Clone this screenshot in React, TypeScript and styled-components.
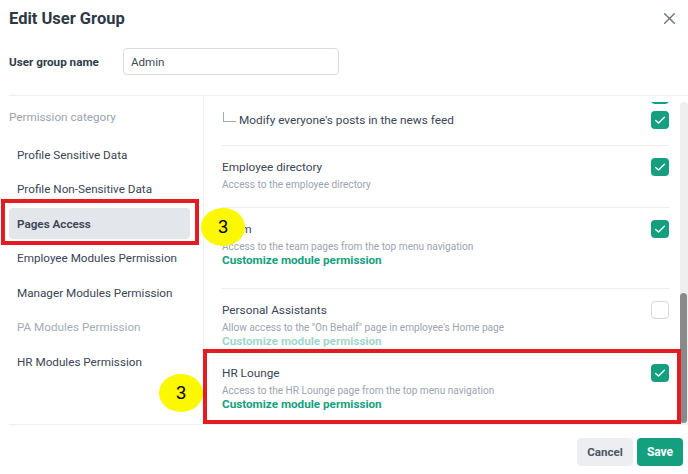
import React from "react";
import styled, { createGlobalStyle } from "styled-components";

const GREEN = "#14a07f";

const Global = createGlobalStyle`
  html, body { margin: 0; padding: 0; background: #ffffff; }
  body { font-family: Roboto, "Noto Sans", Arial, sans-serif; -webkit-font-smoothing: antialiased; }
  * { box-sizing: border-box; }
`;

const Stage = styled.div`
  position: relative;
  width: 688px;
  height: 474px;
  overflow: hidden;
  background: #fff;
`;

const Dialog = styled.div`
  display: flex;
  flex-direction: column;
  padding-left: 9px;
`;

const Header = styled.header`
  height: 36px;
  display: flex;
  align-items: center;
  justify-content: space-between;
  padding-right: 13px;
`;

const Title = styled.h1`
  margin: 0;
  font-size: 16.5px;
  font-weight: 700;
  color: #2d3746;
`;

const CloseButton = styled.button`
  border: 0;
  background: transparent;
  padding: 0;
  width: 11px;
  height: 11px;
  display: flex;
  color: #6b7280;
`;

const NameRow = styled.div`
  display: flex;
  align-items: center;
  margin-top: 12px;
  height: 27px;
`;

const NameLabel = styled.label`
  width: 114px;
  font-size: 11.7px;
  font-weight: 700;
  color: #2f3a4a;
`;

const NameInput = styled.div`
  width: 216px;
  height: 27px;
  border: 1px solid #d9dde3;
  border-radius: 4px;
  padding: 0 7px;
  display: flex;
  align-items: center;
  font-size: 11.6px;
  color: #404a58;
`;

const Body = styled.div`
  margin-top: 20px;
  height: 330px;
  border-top: 1px solid #eef0f2;
  border-bottom: 1px solid #eef0f2;
  display: grid;
  grid-template-columns: 195px 1fr;
`;

const Nav = styled.nav`
  border-right: 1px solid #eef0f2;
  display: flex;
  flex-direction: column;
`;

const NavHeading = styled.div`
  height: 42px;
  display: flex;
  align-items: center;
  font-size: 11.7px;
  color: #9aa3ae;
`;

const NavList = styled.div`
  margin-top: 1px;
  display: flex;
  flex-direction: column;
  gap: 3.5px;
`;

const NavItem = styled.div<{ $active?: boolean; $muted?: boolean }>`
  height: 31px;
  padding-left: 8px;
  display: flex;
  align-items: center;
  border-radius: 4px;
  font-size: 11.7px;
  font-weight: ${(p) => (p.$active ? 600 : 400)};
  color: ${(p) => (p.$muted ? "#a3abb5" : "#3a4454")};
  background: ${(p) => (p.$active ? "#e3e6ea" : "transparent")};
  margin-right: 13px;
`;

const Panel = styled.section`
  padding-top: 6px;
  display: flex;
  min-height: 0;
`;

const Viewport = styled.div`
  flex: 1;
  overflow: hidden;
  display: flex;
  flex-direction: column;
  justify-content: flex-end;
  padding: 0 11px 0 18px;
`;

const Track = styled.div`
  width: 8px;
  background: #efefef;
  border-radius: 4px 4px 0 0;
  display: flex;
  flex-direction: column;
  justify-content: flex-end;
  padding: 0 1px 1px 0;
`;

const Thumb = styled.div`
  height: 130px;
  background: #8a8a8a;
  border-radius: 4px;
`;

const Row = styled.div<{ $tail: number }>`
  border-top: 1px solid #eceef1;
  padding-top: 12px;
  padding-bottom: ${(p) => p.$tail}px;
  display: flex;
  flex-direction: column;
  flex-shrink: 0;
  &:first-child {
    border-top: 0;
  }
`;

const RowMain = styled.div`
  display: flex;
  justify-content: space-between;
  align-items: flex-start;
`;

const Info = styled.div`
  display: flex;
  flex-direction: column;
`;

const RowTitle = styled.div`
  height: 18px;
  line-height: 18px;
  font-size: 11.8px;
  color: #3a4556;
`;

const RowDesc = styled.div`
  margin-top: 2px;
  line-height: 14px;
  font-size: 10.1px;
  color: #9ca4af;
`;

const RowLink = styled.a<{ $disabled?: boolean }>`
  line-height: 13px;
  font-size: 11.7px;
  font-weight: 700;
  color: ${GREEN};
  opacity: ${(p) => (p.$disabled ? 0.42 : 1)};
  text-decoration: none;
`;

const SubList = styled.div`
  display: flex;
  flex-direction: column;
  gap: 7px;
  margin-top: 7px;
`;

const SubRow = styled.div`
  height: 18px;
  display: flex;
  align-items: center;
  justify-content: space-between;
`;

const SubLabel = styled.div`
  display: flex;
  align-items: center;
  font-size: 11.8px;
  color: #3a4556;
`;

const Connector = styled.span`
  width: 13px;
  height: 10px;
  margin: 0 3px 6px 1px;
  border-left: 1px solid #a3aab4;
  border-bottom: 1px solid #a3aab4;
`;

const Box = styled.span<{ $checked: boolean }>`
  width: 18px;
  height: 18px;
  flex-shrink: 0;
  border-radius: 4px;
  display: flex;
  align-items: center;
  justify-content: center;
  background: ${(p) => (p.$checked ? GREEN : "#fff")};
  border: ${(p) => (p.$checked ? "0" : "1.5px solid #d3d8de")};
`;

const Footer = styled.footer`
  margin-top: 13px;
  display: flex;
  justify-content: flex-end;
  gap: 4px;
  padding-right: 5px;
`;

const Button = styled.button<{ $primary?: boolean }>`
  height: 28px;
  border: 0;
  border-radius: 4px;
  padding: 0;
  font-family: inherit;
  font-size: ${(p) => (p.$primary ? 12 : 11.6)}px;
  font-weight: 700;
  color: ${(p) => (p.$primary ? "#fff" : "#4b5563")};
  background: ${(p) => (p.$primary ? GREEN : "#eceef1")};
  width: ${(p) => (p.$primary ? 46 : 56)}px;
`;

const Highlight = styled.div<{ $l: number; $t: number; $w: number; $h: number }>`
  position: absolute;
  left: ${(p) => p.$l}px;
  top: ${(p) => p.$t}px;
  width: ${(p) => p.$w}px;
  height: ${(p) => p.$h}px;
  border: 4px solid #e41b23;
  pointer-events: none;
`;

const Badge = styled.div<{ $l: number; $t: number }>`
  position: absolute;
  left: ${(p) => p.$l}px;
  top: ${(p) => p.$t}px;
  width: 44px;
  height: 38px;
  border-radius: 50%;
  background: #fbf800;
  display: flex;
  align-items: center;
  justify-content: center;
  font-family: "Liberation Sans", Arial, sans-serif;
  font-size: 18px;
  color: #000;
`;

const Check = ({ checked }: { checked: boolean }) => (
  <Box $checked={checked}>
    {checked && (
      <svg width="18" height="18" viewBox="0 0 18 18" fill="none">
        <path d="M4.6 9.4 L7.6 12 L13.4 6.2" stroke="#fff" strokeWidth="1.3" strokeLinecap="round" strokeLinejoin="round" />
      </svg>
    )}
  </Box>
);

type Perm = {
  title: string;
  desc?: string;
  link?: boolean;
  linkDisabled?: boolean;
  checked: boolean;
  tail: number;
  subs?: { label: string; checked: boolean }[];
};

const perms: Perm[] = [
  {
    title: "News feed",
    desc: "Access to the news feed",
    checked: true,
    tail: 16,
    subs: [
      { label: "Post in the news feed", checked: true },
      { label: "Modify everyone's posts in the news feed", checked: true },
    ],
  },
  { title: "Employee directory", desc: "Access to the employee directory", checked: true, tail: 15 },
  { title: "Team", desc: "Access to the team pages from the top menu navigation", link: true, checked: true, tail: 21 },
  {
    title: "Personal Assistants",
    desc: "Allow access to the \"On Behalf\" page in employee's Home page",
    link: true,
    linkDisabled: true,
    checked: false,
    tail: 3,
  },
  { title: "HR Lounge", desc: "Access to the HR Lounge page from the top menu navigation", link: true, checked: true, tail: 13 },
];

const categories = [
  { name: "Profile Sensitive Data" },
  { name: "Profile Non-Sensitive Data" },
  { name: "Pages Access", active: true },
  { name: "Employee Modules Permission" },
  { name: "Manager Modules Permission" },
  { name: "PA Modules Permission", muted: true },
  { name: "HR Modules Permission" },
];

export default function App() {
  return (
    <Stage>
      <Global />
      <Dialog>
        <Header>
          <Title>Edit User Group</Title>
          <CloseButton aria-label="Close">
            <svg width="11" height="11" viewBox="0 0 11 11" fill="none">
              <path d="M0.7 0.7 L10.3 10.3 M10.3 0.7 L0.7 10.3" stroke="currentColor" strokeWidth="1.4" strokeLinecap="round" />
            </svg>
          </CloseButton>
        </Header>
        <NameRow>
          <NameLabel>User group name</NameLabel>
          <NameInput>Admin</NameInput>
        </NameRow>
        <Body>
          <Nav>
            <NavHeading>Permission category</NavHeading>
            <NavList>
              {categories.map((c) => (
                <NavItem key={c.name} $active={c.active} $muted={c.muted}>
                  {c.name}
                </NavItem>
              ))}
            </NavList>
          </Nav>
          <Panel>
            <Viewport>
              {perms.map((p) => (
                <Row key={p.title} $tail={p.tail}>
                  <RowMain>
                    <Info>
                      <RowTitle>{p.title}</RowTitle>
                      {p.desc && <RowDesc>{p.desc}</RowDesc>}
                      {p.link && <RowLink $disabled={p.linkDisabled}>Customize module permission</RowLink>}
                    </Info>
                    <Check checked={p.checked} />
                  </RowMain>
                  {p.subs && (
                    <SubList>
                      {p.subs.map((s) => (
                        <SubRow key={s.label}>
                          <SubLabel>
                            <Connector />
                            {s.label}
                          </SubLabel>
                          <Check checked={s.checked} />
                        </SubRow>
                      ))}
                    </SubList>
                  )}
                </Row>
              ))}
            </Viewport>
            <Track>
              <Thumb />
            </Track>
          </Panel>
        </Body>
        <Footer>
          <Button>Cancel</Button>
          <Button $primary>Save</Button>
        </Footer>
      </Dialog>
      <Highlight $l={1} $t={199} $w={198} $h={46} />
      <Highlight $l={203} $t={349} $w={478} $h={75} />
      <Badge $l={201} $t={208}>3</Badge>
      <Badge $l={159} $t={374}>3</Badge>
    </Stage>
  );
}
